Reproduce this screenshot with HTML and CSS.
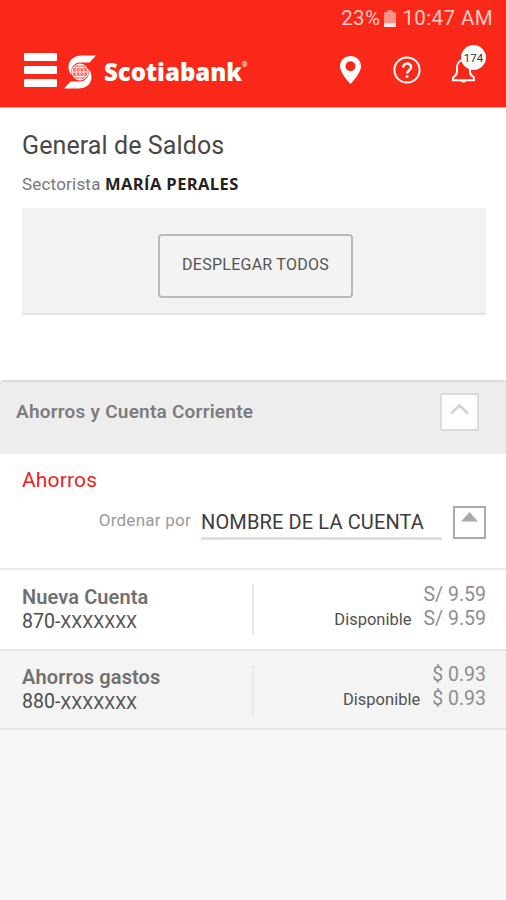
FILE: index.html
```html
<!DOCTYPE html>
<html lang="es">
<head>
<meta charset="utf-8">
<title>General de Saldos</title>
<link rel="stylesheet" href="styles.css">
</head>
<body>
<header class="header">
  <div class="status">
    <span class="percent">23%</span>
    <svg class="battery" width="12" height="17" viewBox="0 0 12 17"><path d="M3.500 0h5v2H12v11H0V2h3.500z" fill="#fc8f87"/><path d="M0 13h12v4H0z" fill="#ffe9e7"/></svg>
    <span class="time">10:47 AM</span>
  </div>
  <div class="toolbar">
    <div class="menu"><i></i><i></i><i></i></div>
    <svg class="logo" width="32" height="34" viewBox="0 0 32 34" fill="none">
      <path d="M32 .5H18C10 .5 4.500 5 4.500 12c0 3.500 1.200 6 3 8C6 13 10 7.700 16 7.400h9.500z" fill="#fff"/>
      <path d="M0 33.500h14c8 0 13.500-4.500 13.500-11.500 0-3.500-1.200-6-3-8 1.500 7-2.500 12.300-8.500 12.600H6.500z" fill="#fff"/>
      <circle cx="16" cy="17" r="8" fill="#fff" fill-opacity=".35" stroke="#fff" stroke-width="1"/>
      <path d="M8 17h16M9.500 12.500h13M9.500 21.500h13M16 9v16M16 9c-5.300 4-5.300 12 0 16M16 9c5.300 4 5.300 12 0 16" stroke="#fff" stroke-width=".8"/>
    </svg>
    <span class="brand">Scotiabank</span><span class="reg">®</span>
    <svg class="pin" width="21" height="28" viewBox="0 0 21 28"><path fill="#fff" fill-rule="evenodd" d="M10.500 0C4.700 0 0 4.500 0 10.300 0 17.500 10.500 28 10.500 28S21 17.500 21 10.300C21 4.500 16.300 0 10.500 0zm0 5.300a5 5 0 1 1 0 10 5 5 0 0 1 0-10z"/></svg>
    <svg class="help" width="28" height="28" viewBox="0 0 28 28" fill="none" stroke="#fff" stroke-width="2"><circle cx="14" cy="14" r="12.600"/><path d="M10.200 11.500c0-5.200 7.900-5 7.900-.4 0 3-4 3.200-4 6.400" stroke-width="2.500"/><path d="M14 19.300v2.500" stroke-width="2.700"/></svg>
    <div class="bell">
      <svg width="26" height="26" viewBox="0 0 26 26" fill="none" stroke="#fff" stroke-width="2"><path d="M12.500 2C8 2 6 5.500 6 9.500V14c0 2.500-1.500 4-4 5.500v2.700h21v-2.700c-2.500-1.500-4-3-4-5.500V9.500C19 5.500 17 2 12.500 2z"/><path d="M8.700 22h7.600c-.7 3.200-6.900 3.200-7.600 0z" fill="#fff" stroke="none"/></svg>
      <span class="badge">174</span>
    </div>
  </div>
</header>
<main>
  <section class="intro">
    <h1>General de Saldos</h1>
    <p class="advisor">Sectorista <b>MARÍA PERALES</b></p>
    <div class="expand"><button>DESPLEGAR TODOS</button></div>
  </section>
  <section class="accounts">
    <div class="group">
      <h2>Ahorros y Cuenta Corriente</h2>
      <div class="toggle"><svg width="19" height="12" viewBox="0 0 19 12"><path d="M1 10.500l8.500-8 8.500 8" fill="none" stroke="#d2d2d2" stroke-width="2.600"/></svg></div>
    </div>
    <div class="sorting">
      <h3>Ahorros</h3>
      <div class="sort">
        <span class="label">Ordenar por</span>
        <span class="select">NOMBRE DE LA CUENTA</span>
        <span class="order"><svg width="17" height="10" viewBox="0 0 17 10"><path d="M8.500 0L17 9.500H0z" fill="#aaa"/></svg></span>
      </div>
    </div>
    <article class="account">
      <div class="who"><h4>Nueva Cuenta</h4><p>870-<span>XXXXXXX</span></p></div>
      <div class="money"><p>S/ 9.59</p><p><small>Disponible</small>S/ 9.59</p></div>
    </article>
    <article class="account alt">
      <div class="who"><h4>Ahorros gastos</h4><p>880-<span>XXXXXXX</span></p></div>
      <div class="money"><p>$ 0.93</p><p><small>Disponible</small>$ 0.93</p></div>
    </article>
  </section>
</main>
</body>
</html>
```

FILE: styles.css
```css
* { box-sizing: border-box; }
body { margin: 0; height: 900px; background: #f8f8f8; font-family: Roboto, sans-serif; color: #444; overflow: hidden; }
h1, h2, h3, h4, p { margin: 0; white-space: nowrap; }
svg { display: block; flex: none; }

.header { height: 108px; background: #f92819; border-bottom: 1px solid #f8a29c; color: #fff; }
.status { height: 36px; display: flex; justify-content: flex-end; align-items: center; padding-right: 13px; font-size: 20.500px; line-height: 36px; color: #ffc9c5; }
.percent { letter-spacing: .4px; }
.battery { margin: 0 6px 0 4px; }
.time { letter-spacing: .4px; }
.toolbar { height: 71px; display: flex; align-items: flex-start; padding-left: 24px; }
.menu { width: 33px; display: grid; gap: 5px; margin: 17px 7px 0 0; }
.menu i { height: 8px; background: #fff; border-radius: 1px; }
.logo { margin-top: 19px; }
.brand { width: 138px; margin: 19px 0 0 8px; font: 800 24px/34px "Open Sans", sans-serif; letter-spacing: 0; }
.reg { width: 6px; margin-top: 24px; font-size: 7px; line-height: 10px; }
.pin { margin: 20px 0 0 92px; }
.help { margin: 20px 0 0 32px; }
.bell { position: relative; margin: 22px 0 0 30px; }
.badge { position: absolute; left: 10px; top: -13px; width: 25px; height: 25px; border-radius: 50%; background: #fff; color: #333; text-align: center; font-size: 11.500px; line-height: 26px; }

.intro { height: 272px; padding: 21px 20px 0 22px; background: #fff; }
h1 { font-size: 25px; line-height: 34px; font-weight: 400; color: #484848; letter-spacing: .1px; }
.advisor { height: 26px; margin-top: 8px; font-size: 17px; line-height: 26px; color: #777; letter-spacing: .2px; }
.advisor b { font: 700 16.500px/26px "Open Sans", sans-serif; color: #222; letter-spacing: .4px; }
.expand { height: 107px; margin-top: 11px; display: flex; justify-content: center; align-items: flex-start; padding: 26px 0 0 3px; background: #f2f2f2; border-bottom: 2px solid #e4e4e4; }
button { width: 195px; height: 64px; padding: 0 0 2px; border: 2px solid #b9b9b9; border-radius: 4px; background: #f3f3f3; font: 400 16px/20px Roboto, sans-serif; letter-spacing: .25px; color: #555; white-space: nowrap; }

.accounts { background: #fff; }
.group { height: 74px; display: flex; justify-content: space-between; align-items: flex-start; padding: 12px 27px 0 16px; background: #ededed; border-top: 2px solid #dcdcdc; border-radius: 4px 4px 0 0; }
h2 { margin-top: 6px; font-size: 19px; line-height: 24px; font-weight: 600; color: #7d7d7d; letter-spacing: .23px; }
.toggle { width: 39px; height: 38px; margin-top: -1px; padding: 8px 0 0 8px; background: #fff; border: 2px solid #dcdcdc; }
.sorting { height: 116px; border-bottom: 2px solid #e9e9e9; padding: 12px 20px 0 22px; }
h3 { font-size: 21px; line-height: 28px; font-weight: 400; color: #ee1f1a; letter-spacing: .15px; }
.sort { display: flex; justify-content: flex-end; margin-top: 12px; }
.label { margin-right: 10px; font-size: 17px; line-height: 29px; color: #9a9a9a; letter-spacing: .25px; }
.select { width: 241px; height: 34px; border-bottom: 3px solid #dedede; font-size: 20px; line-height: 33px; letter-spacing: .13px; color: #3c3c3c; white-space: nowrap; }
.order { width: 33px; height: 33px; margin-left: 11px; padding: 4px 0 0 6px; border: 2px solid #aaa; }

.account { height: 81px; display: grid; grid-template-columns: 232px 1fr; padding: 14px 20px 0 22px; }
.account:not(.alt) { border-bottom: 2px solid #e7e7e7; }
.alt { height: 79px; background: #f4f4f4; border-bottom: 2px solid #e6e6e6; }
.who { height: 51px; border-right: 2px solid #e9e9e9; }
h4 { font-size: 20px; line-height: 26px; font-weight: 600; color: #707070; letter-spacing: .1px; }
.alt h4 { margin-top: -1px; }
.who p { font-size: 19.500px; line-height: 23px; color: #4c4c4c; }
.who span { font-size: 17.500px; color: #555; }
.alt .who span { vertical-align: -1px; }
.money { text-align: right; font-size: 19.500px; line-height: 24px; color: #8e8e8e; margin-top: -1px; }
.alt .money { margin-top: -2px; }
.money small { margin-right: 12px; font-size: 16.500px; color: #505050; }
```
